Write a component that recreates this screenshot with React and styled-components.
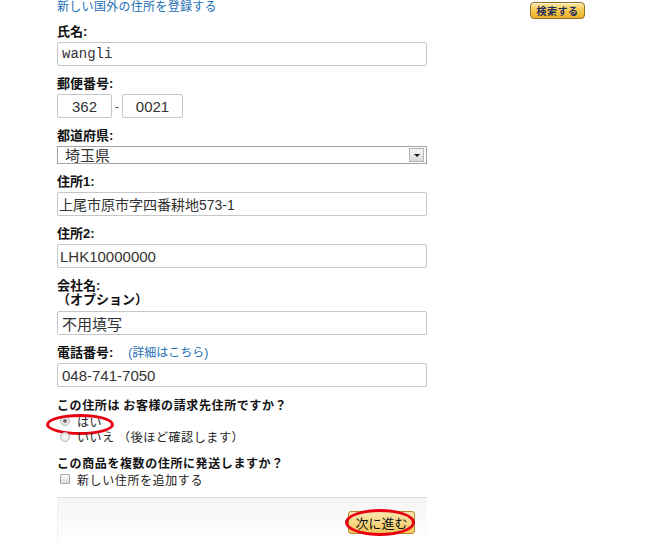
import React from "react";
import styled, { createGlobalStyle } from "styled-components";

const Global = createGlobalStyle`
  html, body { margin: 0; padding: 0; background: #fff; }
  body {
    font-family: "Liberation Sans", "Noto Sans CJK JP", sans-serif;
    color: #111;
  }
  * { box-sizing: border-box; }
`;

const Page = styled.div`
  display: flex;
  align-items: flex-start;
  padding-left: 57px;
  width: 647px;
  height: 547px;
  overflow: hidden;
`;

const Form = styled.div`
  width: 370px;
  display: flex;
  flex-direction: column;
`;

const Side = styled.div`
  margin-left: 103px;
  padding-top: 1px;
`;

const SearchButton = styled.button`
  width: 55px;
  height: 17px;
  padding: 0;
  border: 1px solid #8f6c1e;
  border-radius: 4px;
  background: linear-gradient(#fce7a2, #f5c84f 50%, #eeb12c);
  box-shadow: inset 0 1px 0 rgba(255, 255, 255, 0.6);
  font: bold 10px/15px "Noto Sans CJK JP", sans-serif;
  color: #1f2d5c;
  letter-spacing: 0.5px;
`;

const TopLink = styled.a`
  font-size: 12px;
  line-height: 14px;
  color: #1c6fb5;
  text-decoration: none;
  letter-spacing: 0.3px;
`;

const Field = styled.div`
  margin-top: ${(p) => p.$mt || 10}px;
  display: flex;
  flex-direction: column;
  gap: ${(p) => p.$gap || 2}px;
`;

const Label = styled.div`
  font-size: 13px;
  font-weight: bold;
  line-height: ${(p) => p.$lh || 16}px;
  color: #111;
  white-space: nowrap;
`;

const InlineLink = styled.a`
  font-weight: normal;
  font-size: 12px;
  color: #1c6fb5;
  text-decoration: none;
  margin-left: 15px;
`;

const TextInput = styled.input`
  width: ${(p) => p.$w || 370}px;
  height: 24px;
  border: 1px solid #c6c6c6;
  border-radius: 2px;
  padding: 0 ${(p) => (p.$center ? 0 : p.$pad ?? 4)}px;
  margin: 0;
  font-size: ${(p) => p.$fs || 15}px;
  font-family: ${(p) =>
    p.$mono
      ? '"Liberation Mono", monospace'
      : '"Liberation Sans", "Noto Sans CJK JP", sans-serif'};
  color: #333;
  text-align: ${(p) => (p.$center ? "center" : "left")};
  background: #fff;
  outline: none;
`;

const PostalRow = styled.div`
  display: flex;
  align-items: center;
`;

const Dash = styled.span`
  width: 10px;
  text-align: center;
  font-size: 13px;
  color: #555;
`;

const SelectBox = styled.div`
  width: 370px;
  height: 18px;
  border: 1px solid #a5a5a5;
  display: flex;
  align-items: center;
  justify-content: space-between;
  padding: 0 2px 0 7px;
  font-family: "Noto Sans CJK JP", sans-serif;
  font-size: 15px;
  line-height: 16px;
  color: #333;
`;

const SelectArrow = styled.span`
  width: 15px;
  height: 14px;
  border: 1px solid #b3b3b3;
  background: linear-gradient(#f6f6f6, #d9d9d9);
  display: flex;
  align-items: center;
  justify-content: center;

  &::after {
    content: "";
    border-left: 3px solid transparent;
    border-right: 3px solid transparent;
    border-top: 3px solid #111;
    margin-top: 1px;
  }
`;

const Question = styled.div`
  margin-top: ${(p) => p.$mt || 10}px;
  font-family: "Noto Sans CJK JP", sans-serif;
  font-size: 12px;
  font-weight: bold;
  letter-spacing: 0.6px;
  line-height: 16px;
  white-space: nowrap;
`;

const OptionRow = styled.label`
  position: relative;
  display: flex;
  align-items: center;
  height: ${(p) => p.$h || 16}px;
  padding-left: 3px;
  gap: 7px;
  font-family: "Noto Sans CJK JP", sans-serif;
  font-size: 12px;
  color: #222;
  letter-spacing: 0.6px;
  white-space: nowrap;
`;

const Radio = styled.span`
  width: 10px;
  height: 10px;
  border-radius: 50%;
  border: 1px solid #b4b4b4;
  background: radial-gradient(circle, #fdfdfd, #dedede);
  display: flex;
  align-items: center;
  justify-content: center;

  &::after {
    content: "";
    width: 4px;
    height: 4px;
    border-radius: 50%;
    background: ${(p) => (p.$checked ? "#6a6a6a" : "transparent")};
  }
`;

const Checkbox = styled.span`
  width: 10px;
  height: 10px;
  border: 1px solid #a8a8a8;
  border-radius: 1px;
  background: linear-gradient(#fafafa, #dcdcdc);
`;

const Annotation = styled.span`
  position: absolute;
  left: ${(p) => p.$l}px;
  top: ${(p) => p.$t}px;
  width: ${(p) => p.$w}px;
  height: ${(p) => p.$h}px;
  border: 3px solid #e60012;
  border-radius: 50%;
  pointer-events: none;
`;

const Footer = styled.div`
  margin-top: 10px;
  height: 46px;
  border-top: 1px solid #dcdcdc;
  border-left: 1px solid #f0f0f0;
  background: linear-gradient(#f5f5f5, #ffffff);
  display: flex;
  justify-content: flex-end;
  align-items: flex-start;
  padding: 13px 12px 0 0;
`;

const NextButton = styled.button`
  position: relative;
  width: 67px;
  height: 23px;
  padding: 0;
  border: 1px solid #b38b2c;
  border-radius: 3px;
  background: linear-gradient(#fae6ae, #f2c65a);
  font-family: "Noto Sans CJK JP", sans-serif;
  font-size: 13px;
  line-height: 21px;
  color: #111;
`;

export default function App() {
  return (
    <>
      <Global />
      <Page>
        <Form>
          <TopLink href="#">新しい国外の住所を登録する</TopLink>

          <Field>
            <Label>氏名:</Label>
            <TextInput readOnly value="wangli" $mono $fs={14} />
          </Field>

          <Field>
            <Label>郵便番号:</Label>
            <PostalRow>
              <TextInput readOnly value="362" $w={55} $center />
              <Dash>-</Dash>
              <TextInput readOnly value="0021" $w={61} $center />
            </PostalRow>
          </Field>

          <Field>
            <Label>都道府県:</Label>
            <SelectBox>
              <span>埼玉県</span>
              <SelectArrow />
            </SelectBox>
          </Field>

          <Field>
            <Label>住所1:</Label>
            <TextInput readOnly value="上尾市原市字四番耕地573-1" $pad={1} $fs={14} />
          </Field>

          <Field>
            <Label>住所2:</Label>
            <TextInput readOnly value="LHK10000000" $pad={2} />
          </Field>

          <Field $mt={11} $gap={4}>
            <div>
              <Label $lh={14}>会社名:</Label>
              <Label $lh={14}>（オプション）</Label>
            </div>
            <TextInput readOnly value="不用填写" />
          </Field>

          <Field>
            <Label>
              電話番号:
              <InlineLink href="#">(詳細はこちら)</InlineLink>
            </Label>
            <TextInput readOnly value="048-741-7050" />
          </Field>

          <Question>この住所は お客様の請求先住所ですか？</Question>
          <OptionRow $h={16}>
            <Radio $checked />
            はい
            <Annotation $l={-11} $t={1} $w={68} $h={21} />
          </OptionRow>
          <OptionRow $h={15}>
            <Radio />
            いいえ （後ほど確認します）
          </OptionRow>

          <Question $mt={11}>この商品を複数の住所に発送しますか？</Question>
          <OptionRow $h={16}>
            <Checkbox />
            新しい住所を追加する
          </OptionRow>

          <Footer>
            <NextButton>
              次に進む
              <Annotation $l={-4} $t={-3} $w={70} $h={27} />
            </NextButton>
          </Footer>
        </Form>
        <Side>
          <SearchButton>検索する</SearchButton>
        </Side>
      </Page>
    </>
  );
}
